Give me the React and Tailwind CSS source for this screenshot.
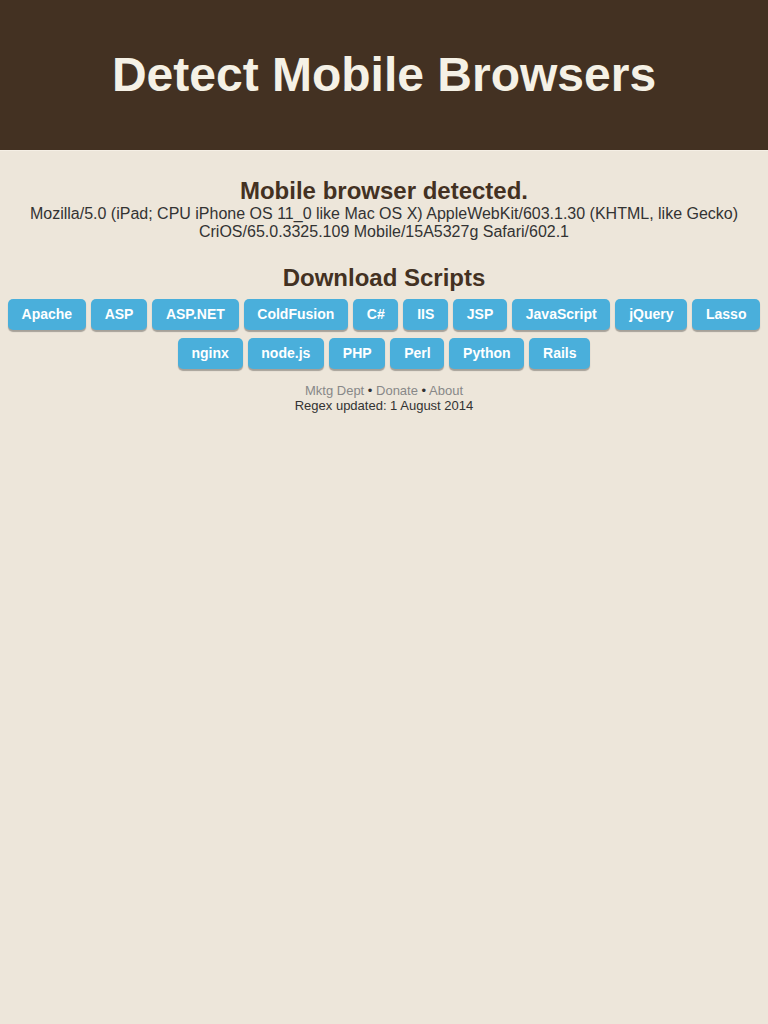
import React from "react";

const row1 = ["Apache", "ASP", "ASP.NET", "ColdFusion", "C#", "IIS", "JSP", "JavaScript", "jQuery", "Lasso"];
const row2 = ["nginx", "node.js", "PHP", "Perl", "Python", "Rails"];

function Btn({ label }) {
  return (
    <a className="inline-block rounded-[5px] bg-[#4aafdb] px-[13.75px] pt-[6px] pb-[7px] text-[14px] font-bold leading-[18px] text-white shadow-[0_2px_1px_rgba(0,0,0,0.3)]">
      {label}
    </a>
  );
}

export default function App() {
  return (
    <div className="min-h-[1024px] bg-[#ede6da] font-['Liberation_Sans',Arial,sans-serif] text-[#333]">
      <header className="flex h-[151px] items-center justify-center border-b border-[#f5efe5] bg-[#433122]">
        <h1 className="text-[48px] font-bold leading-none text-[#f5f1e6]">Detect Mobile Browsers</h1>
      </header>
      <main className="pt-[26px] text-center">
        <h2 className="text-[24px] font-bold leading-[28px] text-[#433122]">Mobile browser detected.</h2>
        <p className="text-[16px] leading-[18px]">
          Mozilla/5.0 (iPad; CPU iPhone OS 11_0 like Mac OS X) AppleWebKit/603.1.30 (KHTML, like Gecko)
          <br />
          CriOS/65.0.3325.109 Mobile/15A5327g Safari/602.1
        </p>
        <h2 className="mt-[23px] text-[24px] font-bold leading-[28px] text-[#433122]">Download Scripts</h2>
        <div className="mt-[7px] flex flex-nowrap justify-center gap-x-[5px]">
          {row1.map((l) => (
            <Btn key={l} label={l} />
          ))}
        </div>
        <div className="mt-[8px] flex flex-wrap justify-center gap-x-[5px]">
          {row2.map((l) => (
            <Btn key={l} label={l} />
          ))}
        </div>
        <div className="mt-[14px] text-[13px] leading-[15px]">
          <div>
            <a className="text-[#888]">Mktg Dept</a> • <a className="text-[#888]">Donate</a> •{" "}
            <a className="text-[#888]">About</a>
          </div>
          <div>Regex updated: 1 August 2014</div>
        </div>
      </main>
    </div>
  );
}
